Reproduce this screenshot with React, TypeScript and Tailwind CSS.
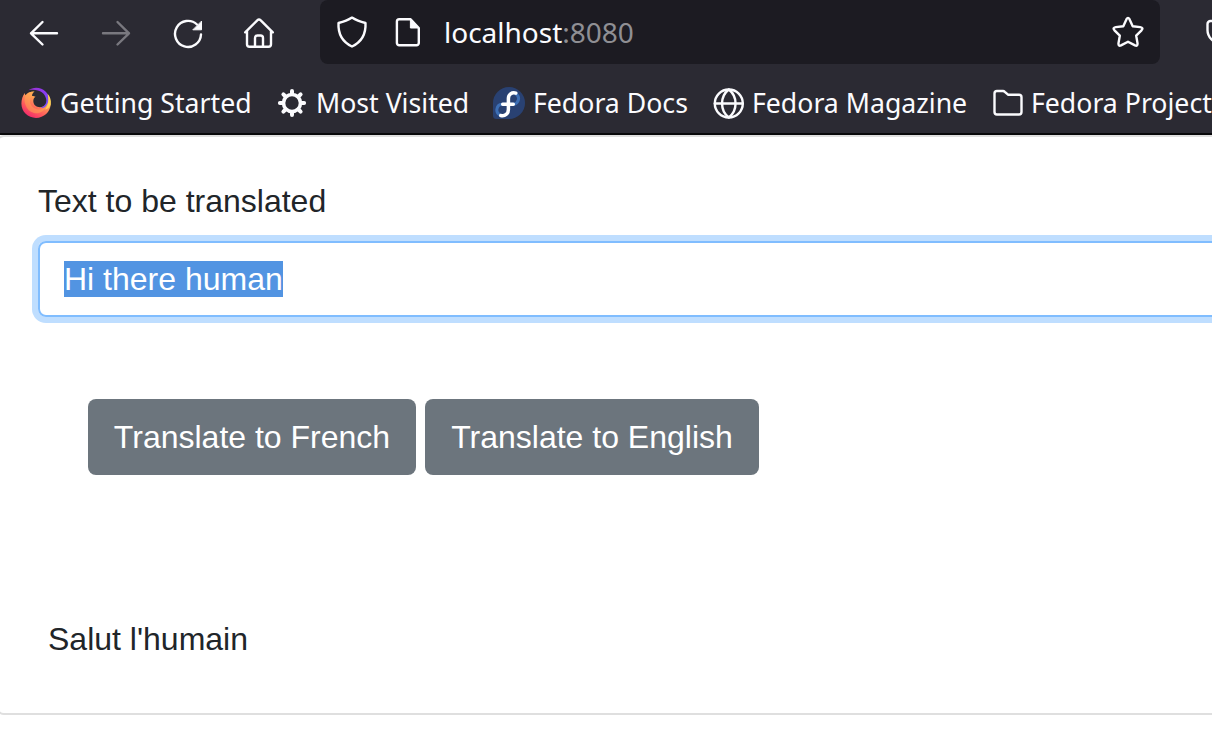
import type { ReactNode } from "react";

function Icon({ children, className = "" }: { children: ReactNode; className?: string }) {
  return (
    <svg
      viewBox="0 0 32 32"
      className={`size-8 shrink-0 ${className}`}
      fill="none"
      stroke="currentColor"
      strokeWidth="2.4"
      strokeLinecap="round"
      strokeLinejoin="round"
    >
      {children}
    </svg>
  );
}

function FirefoxLogo() {
  return (
    <svg viewBox="0 0 32 32" className="size-8 shrink-0">
      <defs>
        <linearGradient id="flame" x1="0.9" y1="0.1" x2="0.3" y2="1">
          <stop offset="0" stopColor="#ffe14d" />
          <stop offset="0.35" stopColor="#ffa055" />
          <stop offset="0.7" stopColor="#ff5a5c" />
          <stop offset="1" stopColor="#f0286c" />
        </linearGradient>
        <linearGradient id="tail" x1="0" y1="0" x2="1" y2="1">
          <stop offset="0" stopColor="#a030d0" />
          <stop offset="0.5" stopColor="#8b3cf0" />
          <stop offset="1" stopColor="#6b57ff" />
        </linearGradient>
      </defs>
      <path
        d="M4.800 6c0 1 .3 1.600.8 2.300C8 5.500 11 4.500 14.500 4.600c-1.600.9-2.500 2.400-2.400 4.300 1.500 0 2.500.2 3.400.8-1.500.8-2.200 2.300-2.200 4.300 0 3.800 3 6.200 6.700 6.200 4.500 0 7.700-3.300 7.700-8.200 0-2-.4-3.500-1-5 2.700 2.300 4.200 6 4 10C30.300 25 24 30.900 16 30.900S1.400 24.700 1.400 16.800C1.400 12.500 2.700 8.500 4.800 6Z"
        fill="url(#flame)"
      />
      <path
        d="M8.500 3.200C13-.2 21-.3 25.800 4.700c3.600 4 3.700 9.800.2 14.300-1.600 1.900-3.600 2.300-5.200 1.600 4.600-1.600 6.200-5.100 5.300-8.900C24.500 5.500 19 1.700 8.500 3.200Z"
        fill="url(#tail)"
      />
      <path d="M10 14c0-4 2-7.500 4.500-9.400-5 0-7.500 1.600-9 3.900C3 12 5 24 14 26c5 1 10-1 12.500-7-3 3.500-8 4.300-11.500 2.500-3-1.500-5-4-5-7.500Z" fill="#ffa552" fillOpacity="0.55" />
      <path d="M27.400 6.600c3 3 3.900 7 3.200 11.400-1.600 2.900-3.600 4.200-5.600 4.600 3.700-4.300 4.300-10 2.400-16Z" fill="#ffd35a" />
    </svg>
  );
}

function FedoraLogo() {
  return (
    <svg viewBox="0 0 32 32" className="size-8 shrink-0" fill="none" strokeLinecap="round">
      <path d="M16 0a16 16 0 1 1 0 32H3.500A3.500 3.500 0 0 1 0 28.500V16A16 16 0 0 1 16 0Z" fill="#294172" />
      <path
        d="M23 6.900a5.700 5.700 0 0 1-2.500 10.400H16M15 17.300H9a5.700 5.700 0 0 0-1.500 11"
        stroke="#3c6eb4"
        strokeWidth="3"
      />
      <path d="M22.800 6.100C18.800 5 15.400 7.300 15.400 11.500v11c0 4.300-3.400 7-7.600 6M9.700 17.300H20.300" stroke="#fff" strokeWidth="3.500" />
    </svg>
  );
}

function Gear() {
  return (
    <Icon>
      <circle cx="16" cy="16" r="8.500" strokeWidth="3.600" />
      <path
        d="M16 3.900v3M16 25.100v3M3.900 16h3M25.100 16h3M7.400 7.400l2.100 2.100M22.500 22.500l2.100 2.100M7.400 24.600l2.100-2.100M22.500 9.500l2.100-2.100"
        strokeWidth="4"
      />
    </Icon>
  );
}

function Bookmark({ icon, label, className }: { icon: ReactNode; label: string; className: string }) {
  return (
    <div className={`flex shrink-0 items-center gap-2 ${className}`}>
      {icon}
      <span className="whitespace-nowrap">{label}</span>
    </div>
  );
}

function BrowserChrome() {
  return (
    <header className="h-[135px] overflow-hidden bg-[#2b2a33] font-['Noto_Sans',sans-serif] text-[26.67px] text-[#fbfbfe]">
      <div className="flex h-16 items-start">
        <nav className="flex w-80 shrink-0 gap-10 pt-[17px] pl-7">
          <Icon>
            <path d="M29 16.300H3M14.500 5 3 16.300l11.500 11.200" />
          </Icon>
          <Icon className="text-[#79787f]">
            <path d="M3 16.300h26M17.500 5 29 16.300 17.500 27.500" />
          </Icon>
          <Icon>
            <path d="M29 17.500a13 13 0 1 1-4-10" />
            <path d="M29.500 4.500v8.300H21.200Z" fill="currentColor" strokeWidth="1" />
          </Icon>
          <Icon className="-ml-px">
            <path d="M2.200 15.300 14.500 3.200a2 2 0 0 1 3 0L29.800 15.300M4 14v13.300A2.500 2.500 0 0 0 6.500 29.800h19a2.500 2.500 0 0 0 2.500-2.500V14M12 29v-8a2.500 2.500 0 0 1 2.500-2.500h3A2.500 2.500 0 0 1 20 21v8" />
          </Icon>
        </nav>
        <div className="flex h-16 w-[840px] shrink-0 items-center rounded-lg bg-[#1c1b22] px-4">
          <Icon>
            <path d="M16 1.600c3.800 2.600 8.500 4.300 13.500 5.400C30 17.500 25.500 26 16 30.500 6.500 26 2 17.500 2.500 7 7.500 5.900 12.200 4.200 16 1.600Z" />
          </Icon>
          <Icon className="ml-6">
            <path d="M7.200 3.200h11.400L26.800 12v15a2.300 2.300 0 0 1-2.300 2.300H7.200A2.300 2.300 0 0 1 4.900 27V5.500a2.300 2.300 0 0 1 2.300-2.300Z" />
            <path d="M18.400 3.500V12h8Z" fill="currentColor" strokeWidth="1" />
          </Icon>
          <span className="ml-5 flex-1 whitespace-nowrap pb-px text-[28px]">
            localhost<span className="text-[#8f8f94]">:8080</span>
          </span>
          <Icon>
            <path d="M14.500 3.200q1.500-2.600 3 0l3.200 7 7.500.9q3.600.6 1.300 3.200l-5.300 5.400 1.300 7.400q.3 3.500-2.500 2.300l-7-3.700-7 3.700q-2.800 1.200-2.500-2.300l1.300-7.400-5.300-5.400q-2.300-2.600 1.300-3.200l7.500-.9Z" />
          </Icon>
        </div>
        <Icon className="ml-[44px] mt-4">
          <path d="M6.500 5h20A3 3 0 0 1 29.500 8v6a13 13 0 0 1-26 0V8a3 3 0 0 1 3-3Z" />
        </Icon>
      </div>
      <div className="flex h-[69px] items-center pt-[9px] pl-5">
        <Bookmark className="w-64" icon={<FirefoxLogo />} label="Getting Started" />
        <Bookmark className="w-[217px]" icon={<Gear />} label="Most Visited" />
        <Bookmark className="w-[219px]" icon={<FedoraLogo />} label="Fedora Docs" />
        <Bookmark
          className="w-[279px]"
          icon={
            <Icon>
              <circle cx="16.800" cy="16.500" r="14" />
              <path d="M2.800 16.500h28M16.800 2.500c-9 7-9 21 0 28 9-7 9-21 0-28Z" />
            </Icon>
          }
          label="Fedora Magazine"
        />
        <Bookmark
          className="w-[260px]"
          icon={
            <Icon>
              <path d="M3.500 25v-18.500A2.500 2.500 0 0 1 6 4h6q1 0 1.800.8L17 7.700h11A2.500 2.500 0 0 1 30.500 10.200V25a2.500 2.500 0 0 1-2.500 2.500H6A2.500 2.500 0 0 1 3.500 25Z" />
            </Icon>
          }
          label="Fedora Project"
        />
      </div>
      <div className="h-0.5 bg-[#08080a]" />
    </header>
  );
}

export default function App() {
  return (
    <div className="h-[730px] w-[1212px] overflow-hidden bg-white font-['Liberation_Sans',sans-serif] text-[32px] leading-[48px] text-[#212529]">
      <BrowserChrome />
      <main className="-ml-1 flex h-[580px] w-[1240px] flex-col rounded-lg border-2 border-[#dfdfdf] pt-10 pl-10">
        <label htmlFor="source">Text to be translated</label>
        <div
          id="source"
          className="mt-4 flex h-[76px] items-center rounded-lg border-2 border-[#80bdff] pl-6 shadow-[0_0_0_6px_#bfdeff]"
        >
          <span className="h-9 bg-[#5294e2] leading-9 text-white">Hi there human</span>
        </div>
        <div className="mt-[82px] ml-[50px] flex gap-[9px]">
          <button className="h-[76px] w-[328px] rounded-lg bg-[#6c757d] text-white">Translate to French</button>
          <button className="h-[76px] w-[334px] rounded-lg bg-[#6c757d] text-white">Translate to English</button>
        </div>
        <p className="mt-[140px] ml-2.5">Salut l'humain</p>
      </main>
    </div>
  );
}
